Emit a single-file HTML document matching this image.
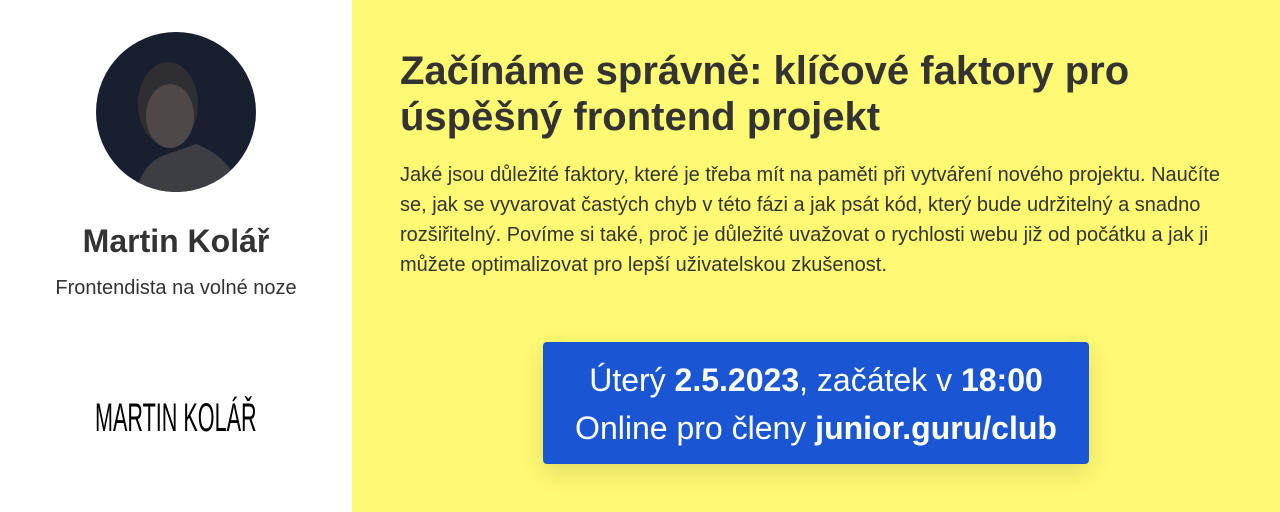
<!DOCTYPE html>
<html><head><meta charset="utf-8"><style>
*{margin:0;padding:0;box-sizing:border-box}
body{width:1280px;height:512px;overflow:hidden;font-family:"Liberation Sans",sans-serif;color:#333;position:relative;background:#fff}
.left{position:absolute;left:0;top:0;width:352px;height:512px;background:#fff}
.right{position:absolute;left:352px;top:0;width:928px;height:512px;background:#fef972}
.av{position:absolute;left:96px;top:32px;width:160px;height:160px;border-radius:50%;background:#18202f;overflow:hidden}
.name{position:absolute;left:0;width:352px;top:223px;text-align:center;font-size:32px;font-weight:bold;color:#333}
.role{position:absolute;left:0;width:352px;top:277px;text-align:center;font-size:20px;color:#333}
.logo{position:absolute;left:95px;top:396px;font-family:"Liberation Sans Narrow","Liberation Sans",sans-serif;font-size:40px;color:#000;transform:scaleX(0.54);transform-origin:left top;white-space:nowrap;line-height:44px}
h1{position:absolute;left:400px;top:48px;width:840px;font-size:40px;line-height:46px;font-weight:bold;color:#333}
p{position:absolute;left:400px;top:160px;width:840px;font-size:20px;line-height:30px;color:#333}
.box{position:absolute;left:543px;top:342px;width:546px;height:122px;background:#1a56d3;border-radius:4px;color:#fff;text-align:center;font-size:32px;line-height:48px;padding-top:14px;box-shadow:0 8px 24px rgba(0,0,0,0.12)}
</style></head><body>
<div class="left">
<div class="av"><svg width="160" height="160" viewBox="0 0 160 160">
<ellipse cx="72" cy="72" rx="30" ry="42" fill="#2e2e33"/>
<ellipse cx="74" cy="84" rx="24" ry="32" fill="#4e4848"/>
<path d="M40 160 Q48 128 72 122 L100 112 Q135 125 145 160Z" fill="#3c3e44"/>
</svg></div>
<div class="name">Martin Kolář</div>
<div class="role">Frontendista na volné noze</div>
<div class="logo">MARTIN KOLÁŘ</div>
</div>
<div class="right"></div>
<h1>Začínáme správně: klíčové faktory pro úspěšný frontend projekt</h1>
<p>Jaké jsou důležité faktory, které je třeba mít na paměti při vytváření nového projektu. Naučíte se, jak se vyvarovat častých chyb v této fázi a jak psát kód, který bude udržitelný a snadno rozšiřitelný. Povíme si také, proč je důležité uvažovat o rychlosti webu již od počátku a jak ji můžete optimalizovat pro lepší uživatelskou zkušenost.</p>
<div class="box">Úterý <b>2.5.2023</b>, začátek v <b>18:00</b><br>Online pro členy <b>junior.guru/club</b></div>
</body></html>
